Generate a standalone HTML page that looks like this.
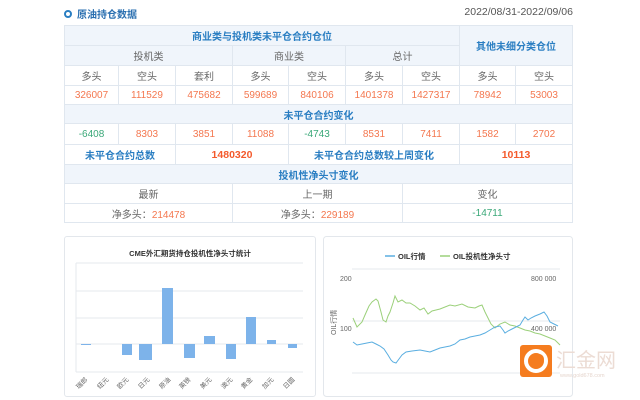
<!DOCTYPE html>
<html><head><meta charset="utf-8"><style>
*{margin:0;padding:0;box-sizing:border-box}
body{width:640px;height:400px;background:#fff;font-family:"Liberation Sans","Noto Sans CJK SC",sans-serif;position:relative;overflow:hidden;font-size:10px;color:#666}
.title{position:absolute;left:64px;top:6px;color:#2a6fb0;font-weight:bold;font-size:10px;display:flex;align-items:center}
.title i{display:inline-block;width:8px;height:8px;border:2px solid #2a7ec2;border-radius:50%;margin-right:5px}
.date{position:absolute;right:67px;top:6px;font-size:10.5px;color:#555}
table{position:absolute;left:64px;top:25px;border-collapse:collapse;table-layout:fixed;width:508px}
td{border:1px solid #e0e7ef;text-align:center;padding:0;font-size:10px;white-space:nowrap}
.h{background:#f0f5fb}
.b{color:#2a7ec2;font-weight:bold}
.o{color:#f4774f}
.g{color:#3aa878}
.ob{color:#f45a2c;font-weight:bold;font-size:10.5px}
.panel{position:absolute;border:1px solid #e3e7ec;border-radius:3px;background:#fff}
</style></head><body>
<div class="title"><i></i>原油持仓数据</div>
<div class="date">2022/08/31-2022/09/06</div>
<table>
<colgroup><col style="width:54px"><col style="width:57px"><col style="width:57px"><col style="width:56px"><col style="width:57px"><col style="width:57px"><col style="width:57px"><col style="width:56px"><col style="width:57px"></colgroup>
<tr style="height:20px" class="h"><td colspan="7" class="b">商业类与投机类未平仓合约仓位</td><td colspan="2" rowspan="2" class="b">其他未细分类仓位</td></tr>
<tr style="height:20px" class="h"><td colspan="3">投机类</td><td colspan="2">商业类</td><td colspan="2">总计</td></tr>
<tr style="height:20px"><td>多头</td><td>空头</td><td>套利</td><td>多头</td><td>空头</td><td>多头</td><td>空头</td><td>多头</td><td>空头</td></tr>
<tr style="height:19px" class="o"><td>326007</td><td>111529</td><td>475682</td><td>599689</td><td>840106</td><td>1401378</td><td>1427317</td><td>78942</td><td>53003</td></tr>
<tr style="height:19px" class="h"><td colspan="9" class="b">未平仓合约变化</td></tr>
<tr style="height:21px" class="o"><td class="g">-6408</td><td>8303</td><td>3851</td><td>11088</td><td class="g">-4743</td><td>8531</td><td>7411</td><td>1582</td><td>2702</td></tr>
<tr style="height:20px"><td colspan="2" class="b">未平仓合约总数</td><td colspan="2" class="ob">1480320</td><td colspan="3" class="b">未平仓合约总数较上周变化</td><td colspan="2" class="ob">10113</td></tr>
<tr style="height:19px" class="h"><td colspan="9" class="b">投机性净头寸变化</td></tr>
<tr style="height:20px"><td colspan="3">最新</td><td colspan="3">上一期</td><td colspan="3">变化</td></tr>
<tr style="height:19px"><td colspan="3">净多头：<span class="o">214478</span></td><td colspan="3">净多头：<span class="o">229189</span></td><td colspan="3" class="g">-14711</td></tr>
</table>

<div class="panel" style="left:64px;top:236px;width:252px;height:161px"></div>
<svg style="position:absolute;left:0;top:0" width="640" height="400">
<text x="190" y="256" font-size="7.5" font-weight="bold" fill="#333" text-anchor="middle" font-family="Liberation Sans,Noto Sans CJK SC,sans-serif">CME外汇期货持仓投机性净头寸统计</text>
<g stroke="#e6e9ee" stroke-width="1"><line x1="76" y1="263" x2="303" y2="263"/><line x1="76" y1="291" x2="303" y2="291"/><line x1="76" y1="318" x2="303" y2="318"/><line x1="76" y1="344" x2="303" y2="344"/><line x1="76" y1="372" x2="303" y2="372"/><line x1="76" y1="263" x2="76" y2="372"/></g>
<g fill="#7db3ea"><rect x="81" y="344" width="10" height="1"/><rect x="122" y="344" width="10" height="11"/><rect x="139" y="344" width="13" height="16"/><rect x="162" y="288" width="11" height="56"/><rect x="184" y="344" width="11" height="14"/><rect x="204" y="336" width="11" height="8"/><rect x="226" y="344" width="10" height="15"/><rect x="246" y="317" width="10" height="27"/><rect x="267" y="340" width="9" height="4"/><rect x="288" y="344" width="9" height="4"/></g>
<g font-size="6.5" fill="#666" font-family="Liberation Sans,Noto Sans CJK SC,sans-serif">
<text transform="translate(88,380) rotate(-45)" text-anchor="end">瑞郎</text>
<text transform="translate(109,380) rotate(-45)" text-anchor="end">纽元</text>
<text transform="translate(129,380) rotate(-45)" text-anchor="end">欧元</text>
<text transform="translate(150,380) rotate(-45)" text-anchor="end">日元</text>
<text transform="translate(171,380) rotate(-45)" text-anchor="end">原油</text>
<text transform="translate(191,380) rotate(-45)" text-anchor="end">英镑</text>
<text transform="translate(212,380) rotate(-45)" text-anchor="end">美元</text>
<text transform="translate(233,380) rotate(-45)" text-anchor="end">澳元</text>
<text transform="translate(253,380) rotate(-45)" text-anchor="end">黄金</text>
<text transform="translate(274,380) rotate(-45)" text-anchor="end">加元</text>
<text transform="translate(295,380) rotate(-45)" text-anchor="end">日圆</text>
</g>
<rect x="323.5" y="236.5" width="249" height="160" rx="3" fill="none" stroke="#e3e7ec"/>
<line x1="385" y1="256" x2="395" y2="256" stroke="#5aaee0" stroke-width="1.5"/>
<text x="398" y="259" font-size="7.5" font-weight="bold" fill="#333" font-family="Liberation Sans,Noto Sans CJK SC,sans-serif">OIL行情</text>
<line x1="440" y1="256" x2="450" y2="256" stroke="#9bd07a" stroke-width="1.5"/>
<text x="453" y="259" font-size="7.5" font-weight="bold" fill="#333" font-family="Liberation Sans,Noto Sans CJK SC,sans-serif">OIL投机性净头寸</text>
<g stroke="#e6e9ee"><line x1="352" y1="269" x2="560" y2="269"/><line x1="352" y1="321" x2="560" y2="321"/><line x1="352" y1="373" x2="560" y2="373"/></g>
<g font-size="7" fill="#666" font-family="Liberation Sans,sans-serif"><text x="340" y="281">200</text><text x="340" y="331">100</text><text x="531" y="281">800 000</text><text x="531" y="331">400 000</text></g>
<text transform="translate(336,335) rotate(-90)" font-size="7" fill="#666" font-family="Liberation Sans,Noto Sans CJK SC,sans-serif">OIL行情</text>
<polyline fill="none" stroke="#9bd07a" stroke-width="1" points="353,318 357,327 362,322 365,315 369,306 372,302 376,299 378,301 381,312 383,320 386,322 388,316 390,312 393,303 395,296 398,302 402,300 406,303 410,303 415,306 420,310 424,308 428,314 432,311 436,310 440,309 445,307 450,305 455,306 462,304 468,307 475,308 479,306 482,305 485,312 488,318 491,324 495,328 500,324 505,322 510,325 515,326 520,328 525,330 530,331 535,333 540,334 545,336 550,338 555,340 558,343 560,345"/>
<polyline fill="none" stroke="#5aaee0" stroke-width="1" points="353,342 357,345 362,344 367,343 372,342 376,344 380,346 384,349 388,355 391,360 393,362 396,363 399,359 402,355 406,352 412,351 420,350 425,351 430,352 435,350 440,348 445,347 450,346 455,344 460,340 465,339 470,337 475,336 480,335 485,333 490,330 495,327 500,326 503,330 505,333 508,331 512,329 516,327 520,325 523,320 525,317 528,320 531,318 535,316 540,314 544,312 547,316 550,322 554,324 558,326"/>
<rect x="520" y="345" width="32" height="32" rx="3" fill="#f57c1f"/>
<circle cx="536" cy="361" r="10" fill="none" stroke="#fff" stroke-width="4"/>
<circle cx="539" cy="359" r="5" fill="#f57c1f"/>
<text x="556" y="367" font-size="20" fill="#ecdcd4" font-family="Noto Sans CJK SC,sans-serif">汇金网</text>
<text x="560" y="377" font-size="5.5" fill="#e6d6ce" font-family="Liberation Sans,sans-serif">www.gold678.com</text>
</svg>
</body></html>
